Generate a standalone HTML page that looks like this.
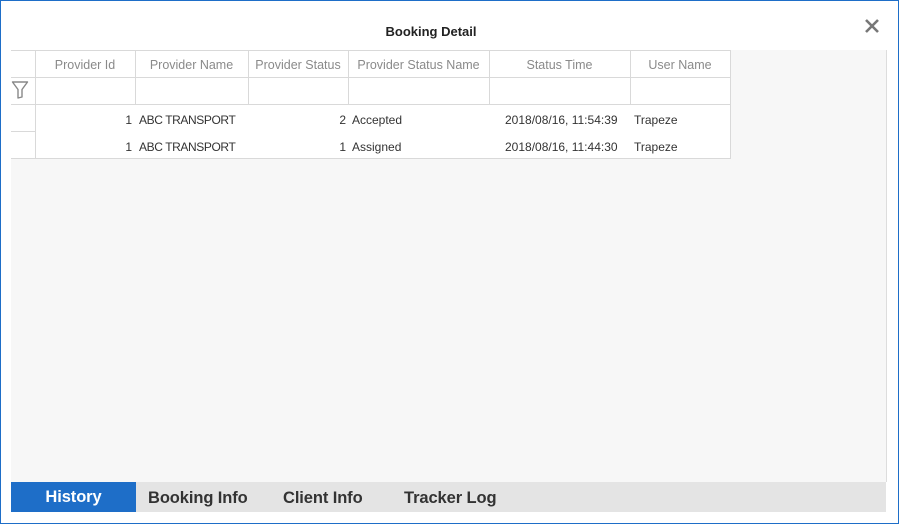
<!DOCTYPE html>
<html><head><style>
*{margin:0;padding:0;box-sizing:border-box}
body{width:899px;height:524px;background:#fff;font-family:"Segoe UI","Liberation Sans",sans-serif;position:relative;overflow:hidden}
.frame{position:absolute;left:0;top:0;width:899px;height:524px;border:1px solid #1e6ec8}
.title{position:absolute;left:0;width:862px;top:24px;text-align:center;font-weight:bold;font-size:13px;color:#222}
.x{position:absolute;left:864px;top:18px}
.panel{position:absolute;left:11px;top:50px;width:876px;height:432px;background:#f7f7f7;border-right:1px solid #ddd}
.a{position:absolute}
.hl{position:absolute;height:1px;background:#d9d9d9}
.vl{position:absolute;width:1px;background:#d9d9d9}
.h{position:absolute;top:58px;font-size:12.5px;color:#8a8a8a;text-align:center}
.d{position:absolute;font-size:12px;color:#333}
.tabs{position:absolute;left:11px;top:482px;width:875px;height:30px;background:#e4e4e4}
.tab{position:absolute;top:1px;height:30px;line-height:30px;font-size:16.5px;font-weight:bold;color:#333;letter-spacing:-0.1px}
</style></head><body>
<div class="frame"></div>
<div class="title">Booking Detail</div>
<svg class="x" width="16" height="16" viewBox="0 0 16 16"><path d="M2 2L14 14M14 2L2 14" stroke="#777" stroke-width="2.6"/></svg>
<div class="panel"></div>
<div class="a" style="left:11px;top:50px;width:720px;height:109px;background:#fff"></div>
<div class="hl" style="left:11px;top:50px;width:720px"></div>
<div class="hl" style="left:11px;top:77px;width:720px"></div>
<div class="hl" style="left:11px;top:104px;width:720px"></div>
<div class="hl" style="left:11px;top:131px;width:24px"></div>
<div class="hl" style="left:11px;top:158px;width:720px"></div>
<div class="vl" style="left:35px;top:50px;height:109px"></div>
<div class="vl" style="left:135px;top:50px;height:54px"></div>
<div class="vl" style="left:248px;top:50px;height:54px"></div>
<div class="vl" style="left:348px;top:50px;height:54px"></div>
<div class="vl" style="left:489px;top:50px;height:54px"></div>
<div class="vl" style="left:630px;top:50px;height:54px"></div>
<div class="vl" style="left:730px;top:50px;height:109px"></div>
<svg class="a" style="left:11px;top:80px" width="18" height="20" viewBox="0 0 18 20"><path d="M1.5 2H16.5L11 9.5V17L7 18V9.5Z" fill="none" stroke="#888" stroke-width="1.4" stroke-linejoin="round"/></svg>
<div class="h" style="left:35px;width:100px">Provider Id</div>
<div class="h" style="left:135px;width:113px">Provider Name</div>
<div class="h" style="left:248px;width:100px">Provider Status</div>
<div class="h" style="left:348px;width:141px">Provider Status Name</div>
<div class="h" style="left:489px;width:141px">Status Time</div>
<div class="h" style="left:630px;width:100px">User Name</div>
<div class="d" style="left:35px;width:97px;text-align:right;top:113px">1</div>
<div class="d" style="left:139px;top:113px;letter-spacing:-0.4px">ABC TRANSPORT</div>
<div class="d" style="left:248px;width:98px;text-align:right;top:113px">2</div>
<div class="d" style="left:352px;top:113px">Accepted</div>
<div class="d" style="left:505px;top:113px">2018/08/16, 11:54:39</div>
<div class="d" style="left:634px;top:113px">Trapeze</div>
<div class="d" style="left:35px;width:97px;text-align:right;top:140px">1</div>
<div class="d" style="left:139px;top:140px;letter-spacing:-0.4px">ABC TRANSPORT</div>
<div class="d" style="left:248px;width:98px;text-align:right;top:140px">1</div>
<div class="d" style="left:352px;top:140px">Assigned</div>
<div class="d" style="left:505px;top:140px">2018/08/16, 11:44:30</div>
<div class="d" style="left:634px;top:140px">Trapeze</div>
<div class="tabs">
<div class="tab" style="left:0;width:125px;background:#1e6ec8;color:#fff;text-align:center;top:0;line-height:31px">History</div>
<div class="tab" style="left:137px">Booking Info</div>
<div class="tab" style="left:272px">Client Info</div>
<div class="tab" style="left:393px">Tracker Log</div>
</div>
</body></html>
